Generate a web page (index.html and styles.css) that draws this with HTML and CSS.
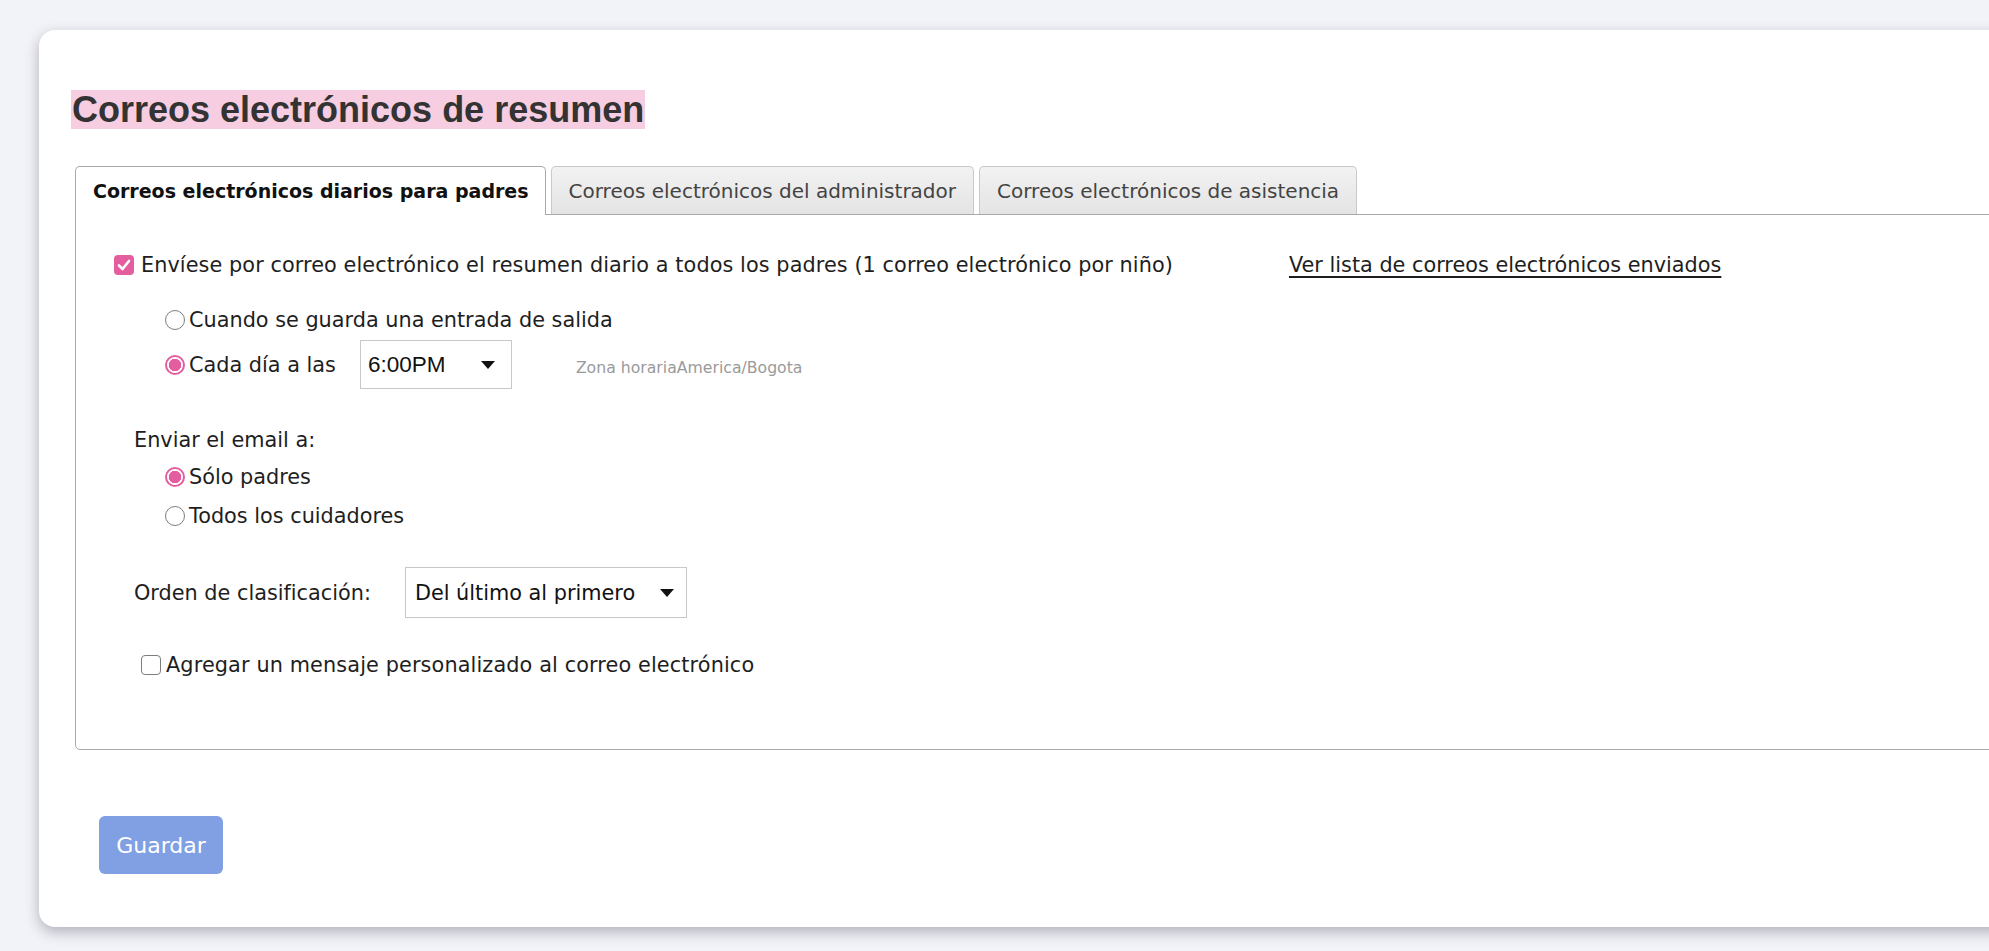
FILE: index.html
```html
<!DOCTYPE html>
<html lang="es">
<head>
<meta charset="utf-8">
<title>Correos electrónicos de resumen</title>
<link rel="stylesheet" href="styles.css">
</head>
<body>
<div class="card">
  <h1 class="title">Correos electrónicos de resumen</h1>
  <div class="tabs-wrap">
    <div class="tabs">
      <div class="tab active">Correos electrónicos diarios para padres</div>
      <div class="tab">Correos electrónicos del administrador</div>
      <div class="tab">Correos electrónicos de asistencia</div>
    </div>
    <div class="panel">
      <div class="row row-main">
        <span class="check checked"><svg viewBox="0 0 20 20" width="20" height="20"><path d="M5 10.5 L8.5 14 L15 6" fill="none" stroke="#fff" stroke-width="2.6" stroke-linecap="round" stroke-linejoin="round"/></svg></span>
        <span class="label">Envíese por correo electrónico el resumen diario a todos los padres (1 correo electrónico por niño)</span>
        <a class="link" href="#">Ver lista de correos electrónicos enviados</a>
      </div>
      <div class="group when">
        <div class="row row-radio">
          <span class="radio"></span>
          <span class="label">Cuando se guarda una entrada de salida</span>
        </div>
        <div class="row row-radio row-time">
          <span class="radio checked"></span>
          <span class="label">Cada día a las</span>
          <div class="select select-time"><span>6:00PM</span><svg width="14" height="8" viewBox="0 0 14 8"><path d="M0 0 H14 L7 8 Z" fill="#111"/></svg></div>
          <span class="tz">Zona horariaAmerica/Bogota</span>
        </div>
      </div>
      <div class="row row-sub label">Enviar el email a:</div>
      <div class="group to">
        <div class="row row-radio2">
          <span class="radio checked"></span>
          <span class="label">Sólo padres</span>
        </div>
        <div class="row row-radio2">
          <span class="radio"></span>
          <span class="label">Todos los cuidadores</span>
        </div>
      </div>
      <div class="row row-order">
        <span class="label">Orden de clasificación:</span>
        <div class="select select-order"><span>Del último al primero</span><svg width="14" height="8" viewBox="0 0 14 8"><path d="M0 0 H14 L7 8 Z" fill="#111"/></svg></div>
      </div>
      <div class="row row-msg">
        <span class="check"></span>
        <span class="label label-msg">Agregar un mensaje personalizado al correo electrónico</span>
      </div>
    </div>
  </div>
  <button class="save" type="button">Guardar</button>
</div>
</body>
</html>
```

FILE: styles.css
```css
html, body {
  margin: 0;
  padding: 0;
  background: #f2f3f8;
  overflow: hidden;
  height: 100%;
}
body {
  padding: 30px 0 0 39px;
  box-sizing: border-box;
  font-family: "DejaVu Sans", sans-serif;
  color: #1e1e1e;
}
.card {
  width: 2100px;
  box-sizing: border-box;
  background: #fff;
  border-radius: 16px;
  box-shadow: 0 5px 14px rgba(40, 40, 60, 0.32);
  padding: 60px 32px 53px 32px;
}
.title {
  display: inline-block;
  margin: 0;
  padding: 0 1px;
  background: #f6cde1;
  font-family: "Liberation Sans", Arial, sans-serif;
  font-weight: bold;
  font-size: 36px;
  line-height: 39px;
  color: #333;
}
.tabs-wrap {
  margin: 37px 0 0 4px;
}
.tabs {
  display: flex;
  gap: 5px;
  height: 48px;
  position: relative;
  z-index: 1;
}
.tab {
  box-sizing: border-box;
  height: 48px;
  padding: 0 17px;
  display: flex;
  align-items: center;
  font-size: 20px;
  color: #444;
  border: 1px solid #c9c9c9;
  border-bottom: none;
  border-radius: 5px 5px 0 0;
  background: linear-gradient(#f2f2f2, #e4e4e4);
  white-space: nowrap;
}
.tab.active {
  height: 49px;
  padding: 0 16px 0 17px;
  font-size: 19px;
  background: #fff;
  border-color: #a9a9a9;
  color: #111;
  font-weight: bold;
}
.panel {
  border: 1px solid #a9a9a9;
  border-radius: 0 0 0 5px;
  padding: 35px 0 69px 38px;
  font-size: 20.8px;
}
.row {
  display: flex;
  align-items: center;
}
.label {
  white-space: nowrap;
}
.row-main {
  height: 30px;
}
.row-main .label {
  margin-left: 7px;
  letter-spacing: 0.08px;
}
.link {
  margin-left: 116px;
  color: #1e1e1e;
  text-decoration: underline;
  text-underline-offset: 4px;
}
.check {
  box-sizing: border-box;
  width: 20px;
  height: 20px;
  border-radius: 4px;
  border: 1.5px solid #7d7d7d;
  flex: none;
  display: inline-block;
}
.check.checked {
  border: none;
  background: #e45e9f;
}
.check svg {
  display: block;
}
.radio {
  box-sizing: border-box;
  width: 20px;
  height: 20px;
  border-radius: 50%;
  border: 1.5px solid #7d7d7d;
  flex: none;
  display: inline-block;
  position: relative;
}
.radio.checked {
  border: 2px solid #e45e9f;
  background: radial-gradient(circle, #e45e9f 0 6px, #fff 6.5px);
}
.group.when {
  margin: 25px 0 0 51px;
}
.row-radio {
  height: 30px;
}
.row-radio .label {
  margin-left: 4px;
}
.row-time {
  height: 49px;
  margin-top: 5px;
}
.select {
  box-sizing: border-box;
  display: flex;
  align-items: center;
  justify-content: space-between;
  border: 1px solid #c8c8c8;
  background: #fff;
  color: #111;
}
.select-time {
  width: 152px;
  height: 49px;
  margin-left: 24px;
  padding: 0 16px 0 7px;
  font-family: "Liberation Sans", Arial, sans-serif;
  font-size: 22.5px;
}
.select-order {
  width: 282px;
  height: 51px;
  margin-left: 34px;
  padding: 0 12px 0 9px;
}
.tz {
  margin: 6px 0 0 64px;
  font-size: 15.7px;
  color: #9a9a9a;
}
.row-sub {
  height: 30px;
  margin: 36px 0 0 20px;
}
.group.to {
  margin: 2px 0 0 51px;
}
.row-radio2 {
  height: 39px;
}
.row-radio2 .label {
  margin-left: 4px;
}
.row-order {
  height: 51px;
  margin: 32px 0 0 20px;
}
.row-msg {
  height: 30px;
  margin: 32px 0 0 27px;
}
.row-msg .label {
  margin-left: 5px;
}
.label-msg {
  letter-spacing: 0.12px;
}
.save {
  display: block;
  margin: 66px 0 0 28px;
  width: 124px;
  height: 58px;
  border: none;
  border-radius: 6px;
  background: #819fe3;
  color: #fff;
  font-family: "DejaVu Sans", sans-serif;
  font-size: 22px;
  padding: 0;
}
```
